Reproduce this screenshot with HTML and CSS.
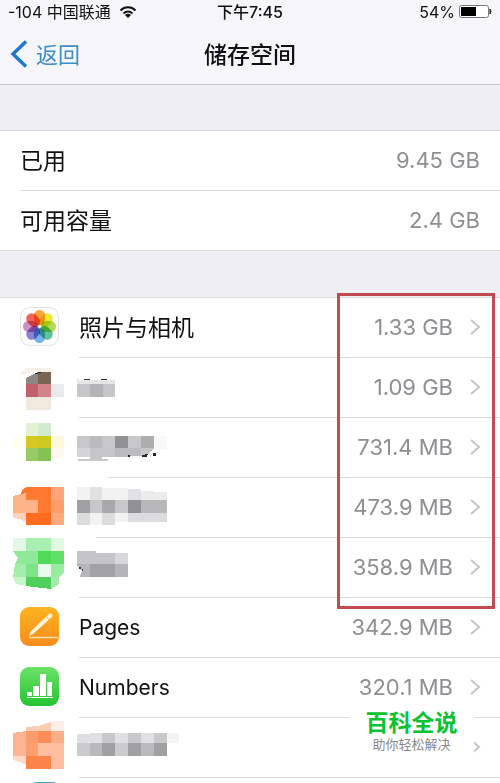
FILE: index.html
```html
<!DOCTYPE html>
<html lang="zh-CN">
<head>
  <meta charset="UTF-8">
  <meta name="viewport" content="width=device-width, initial-scale=1">
  <title>储存空间</title>
  <link rel="stylesheet" href="styles.css">
</head>
<body>

  <svg width="0" height="0" class="defs" aria-hidden="true">
    <symbol id="chevron" viewBox="0 0 12 18">
      <path d="M2 2l8 7-8 7" fill="none" stroke="#c4c4c9" stroke-width="2"/>
    </symbol>
    <linearGradient id="pages-bg" x1="0" y1="0" x2="0" y2="1">
      <stop offset="0" stop-color="#fbb420"/>
      <stop offset="1" stop-color="#f78c1c"/>
    </linearGradient>
    <linearGradient id="numbers-bg" x1="0" y1="0" x2="0" y2="1">
      <stop offset="0" stop-color="#6be268"/>
      <stop offset="1" stop-color="#25c432"/>
    </linearGradient>
  </svg>

  <header class="header">
    <div class="status">
      <div class="carrier">
        <span>-104 中国联通</span>
        <svg width="18" height="14" viewBox="0 0 18 14" aria-hidden="true">
          <path d="M1.5 5.5a10.5 10.5 0 0 1 15 0M4.500 8.500a6.300 6.300 0 0 1 9 0" fill="none" stroke="#111" stroke-width="2"/>
          <path d="M9 13l-3-3a4.200 4.200 0 0 1 6 0z" fill="#111"/>
        </svg>
      </div>
      <span class="time">下午7:45</span>
      <div class="power">
        <span>54%</span>
        <svg width="33" height="14" viewBox="0 0 33 14" aria-hidden="true">
          <rect x="0.500" y="0.500" width="29" height="12" rx="2" fill="#fff" stroke="#777"/>
          <path d="M2 2h15v9H2z" fill="#000"/>
          <path d="M31 4q2 2.500 0 5z" fill="#222" stroke="#222"/>
        </svg>
      </div>
    </div>
    <nav class="navbar">
      <a class="back" href="#">
        <svg width="18" height="28" viewBox="0 0 18 28" aria-hidden="true">
          <path d="M16 1.500L3 14l13 12.500" fill="none" stroke="#1c78d4" stroke-width="3.400"/>
        </svg>
        <span>返回</span>
      </a>
      <h1>储存空间</h1>
    </nav>
  </header>

  <main>
    <dl class="summary">
      <div class="total"><dt>已用</dt><dd>9.45 GB</dd></div>
      <div class="total"><dt>可用容量</dt><dd>2.4 GB</dd></div>
    </dl>

    <div class="apps">
      <ul class="app-list">
        <li><a class="app" href="#">
          <svg class="icon" viewBox="0 0 77 60" aria-hidden="true">
            <rect x="20.500" y="9.500" width="38" height="38" rx="9" fill="#fdfdfd" stroke="#e2e2e6"/>
            <g class="petals">
              <rect x="34" y="12" width="11" height="15" rx="5.500" fill="#fba63c"/>
              <rect x="34" y="12" width="11" height="15" rx="5.500" fill="#eeea32" transform="rotate(45 39.500 28.500)"/>
              <rect x="34" y="12" width="11" height="15" rx="5.500" fill="#b4da55" transform="rotate(90 39.500 28.500)"/>
              <rect x="34" y="12" width="11" height="15" rx="5.500" fill="#62c69a" transform="rotate(135 39.500 28.500)"/>
              <rect x="34" y="12" width="11" height="15" rx="5.500" fill="#76b4ea" transform="rotate(180 39.500 28.500)"/>
              <rect x="34" y="12" width="11" height="15" rx="5.500" fill="#8c82d0" transform="rotate(225 39.500 28.500)"/>
              <rect x="34" y="12" width="11" height="15" rx="5.500" fill="#d092c6" transform="rotate(270 39.500 28.500)"/>
              <rect x="34" y="12" width="11" height="15" rx="5.500" fill="#f5645a" transform="rotate(315 39.500 28.500)"/>
            </g>
          </svg>
          <span class="name">照片与相机</span>
          <span class="size">1.33 GB</span>
          <svg class="arrow"><use href="#chevron"/></svg>
        </a></li>

        <li><a class="app" href="#" aria-label="1.09 GB">
          <svg class="icon mosaic" viewBox="0 0 77 60" aria-hidden="true">
            <path d="M21 14l5-4h25v4H32l-11 3z" fill="#f5f1e9"/>
            <path d="M26 20l12-6v12H26z" fill="#8f8581"/>
            <path d="M38 14h13v12H38z" fill="#786452"/>
            <path d="M35 16l6-2" stroke="#222"/>
            <path d="M26 26h12v13H26z" fill="#c0606c"/>
            <path d="M38 26h13v13H38z" fill="#d08488"/>
            <path d="M51 26h13v13H51z" fill="#e9e9ee"/>
            <path d="M26 39h25v13H26z" fill="#f0e9de"/>
          </svg>
          <svg class="mosaic hidden-name" viewBox="0 0 104 60" aria-hidden="true">
            <path d="M0 19l2 3h36v4H0z" fill="#e6e6e6"/>
            <path d="M0 26h13v13H0zM26 26h12v13H26z" fill="#c6c6c8"/>
            <path d="M13 26h13v13H13z" fill="#b4b4b6"/>
            <path d="M6 22q4-3 8 0zM23 22q4-3 8 0z" fill="#333"/>
          </svg>
          <span class="size">1.09 GB</span>
          <svg class="arrow"><use href="#chevron"/></svg>
        </a></li>

        <li class="inset-far"><a class="app" href="#" aria-label="731.4 MB">
          <svg class="icon mosaic" viewBox="0 0 77 60" aria-hidden="true">
            <path d="M26 5h12v13H26z" fill="#e4f2d4"/>
            <path d="M38 5h13v13H38z" fill="#d2eacd"/>
            <path d="M13 18h13v12H13z" fill="#fffdec"/>
            <path d="M26 18h12v12H26z" fill="#d5c820"/>
            <path d="M38 18h13v12H38z" fill="#cdc91e"/>
            <path d="M51 18h13v12H51z" fill="#fdf7dc"/>
            <path d="M26 30h12v13H26z" fill="#9aca66"/>
            <path d="M38 30h13v13H38z" fill="#85c154"/>
            <path d="M51 30h13v10H51z" fill="#fffaf0"/>
          </svg>
          <svg class="mosaic hidden-name" viewBox="0 0 104 60" aria-hidden="true">
            <path d="M0 18h13v12H0zM25 18h13v12H25zM51 18h13v12H51z" fill="#c8c8ca"/>
            <path d="M13 18h12v12H13z" fill="#bbbbbd"/>
            <path d="M38 18h13v12H38z" fill="#929294"/>
            <path d="M64 18h13v12H64z" fill="#adadaf"/>
            <path d="M77 18h13v14H77z" fill="#f8f8f8"/>
            <path d="M0 30h13v9H0z" fill="#d4d4d6"/>
            <path d="M13 30h12v11H13zM25 30h13v9H25zM64 30h13l-4 5-9 3z" fill="#c6c6c8"/>
            <path d="M38 30h13v9H38zM51 30h13v8H51z" fill="#bcbcbe"/>
            <path d="M1 41h30v2H1z" fill="#c8c8ca"/>
            <path d="M51 37h2v2h-2zM65 37h5v2h-5zM68 36h3v1h-3zM76 35h3v3h-3z" fill="#222"/>
          </svg>
          <span class="size">731.4 MB</span>
          <svg class="arrow"><use href="#chevron"/></svg>
        </a></li>

        <li class="inset-near"><a class="app" href="#" aria-label="473.9 MB">
          <svg class="icon mosaic" viewBox="0 0 77 60" aria-hidden="true">
            <path d="M21 15q2-6 8-6h22v38H26z" fill="#ff7a30"/>
            <path d="M51 9h13v13H51z" fill="#ffa378"/>
            <path d="M13 18l13-3v7h12v13H13z" fill="#ffb388"/>
            <path d="M51 22h13v13H51z" fill="#ff9d68"/>
            <path d="M13 35h13v9l-6-3-7-1z" fill="#ffd2b8"/>
            <path d="M26 35h25v12H26z" fill="#ff6b1f"/>
            <path d="M51 35h13v12H51z" fill="#ffaa7c"/>
          </svg>
          <svg class="mosaic hidden-name" viewBox="0 0 104 60" aria-hidden="true">
            <path d="M0 9h13v13H0zM25 10h26v12H25z" fill="#f2f2f3"/>
            <path d="M13 9h12v13H13zM51 11h13v11H51z" fill="#e1e1e3"/>
            <path d="M64 13h13v9H64zM77 14h13v8H77z" fill="#ebebec"/>
            <path d="M0 22h13v13H0z" fill="#a1a1a3"/>
            <path d="M13 22h12v13H13zM38 22h13v13H38z" fill="#c8c8ca"/>
            <path d="M25 22h13v13H25z" fill="#a8a8aa"/>
            <path d="M51 22h13v13H51z" fill="#909092"/>
            <path d="M64 22h26v13H64z" fill="#b8b8ba"/>
            <path d="M0 35h13v12H0zM25 35h13v12H25zM51 35h39v9H51z" fill="#dcdcde"/>
            <path d="M13 35h12v12H13zM38 35h13v9H38z" fill="#f2f2f3"/>
          </svg>
          <span class="size">473.9 MB</span>
          <svg class="arrow"><use href="#chevron"/></svg>
        </a></li>

        <li><a class="app" href="#" aria-label="358.9 MB">
          <svg class="icon mosaic" viewBox="0 0 77 60" aria-hidden="true">
            <path d="M13 0h51v13H13z" fill="#e2fae5"/>
            <path d="M26 0h25v13H26z" fill="#a9efb1"/>
            <path d="M13 13h25v13H15l3-6z" fill="#90e998"/>
            <path d="M38 13h13v13H38z" fill="#50da57"/>
            <path d="M51 13h13v13H51z" fill="#5fdf68"/>
            <path d="M15 26h11v13H13z" fill="#a2eda9"/>
            <path d="M26 26h12v13H26z" fill="#80e389"/>
            <path d="M38 26h13v13H38z" fill="#e9fbea"/>
            <path d="M51 26h13v8l-5 5h-8z" fill="#98eca0"/>
            <path d="M13 39h13v9l-10-2z" fill="#c9f5cd"/>
            <path d="M26 39h25v12l-25-3z" fill="#50cf5c"/>
            <path d="M51 39h8v7l-8 5z" fill="#a4eaab"/>
          </svg>
          <svg class="mosaic hidden-name" viewBox="0 0 104 60" aria-hidden="true">
            <path d="M0 13h19v2h19v11H0z" fill="#c5c5c7"/>
            <path d="M38 15h13v11H38z" fill="#d8d8da"/>
            <path d="M0 26h13v13H0z" fill="#b6b6b8"/>
            <path d="M13 26h25v13H13z" fill="#a2a2a4"/>
            <path d="M38 26h13v13H38z" fill="#b5b5b7"/>
            <path d="M0 28l5 4-2 7H0z" fill="#fff"/>
            <path d="M2 29h2v2H2zM5 31h1v2H5z" fill="#333"/>
          </svg>
          <span class="size">358.9 MB</span>
          <svg class="arrow"><use href="#chevron"/></svg>
        </a></li>

        <li><a class="app" href="#">
          <svg class="icon" viewBox="0 0 77 60" aria-hidden="true">
            <rect x="20" y="9" width="39" height="39" rx="9" fill="url(#pages-bg)"/>
            <path d="M29 38l2-5 18-17q2-1 3 0t0 3L33 36z" fill="#fff5dc"/>
            <path d="M46 18l3 4" stroke="#f8b85a"/>
            <path d="M29 39.500h29" stroke="#ffe2a8" stroke-width="1.500"/>
          </svg>
          <span class="name latin">Pages</span>
          <span class="size">342.9 MB</span>
          <svg class="arrow"><use href="#chevron"/></svg>
        </a></li>

        <li><a class="app" href="#">
          <svg class="icon" viewBox="0 0 77 60" aria-hidden="true">
            <rect x="20" y="9" width="39" height="39" rx="9" fill="url(#numbers-bg)"/>
            <path d="M27 34h5v4h-5zM33 28h6v10h-6zM40 16h6v22h-6zM47 24h5v14h-5zM27 39h26v1H27z" fill="#fff"/>
          </svg>
          <span class="name latin">Numbers</span>
          <span class="size">320.1 MB</span>
          <svg class="arrow"><use href="#chevron"/></svg>
        </a></li>

        <li><a class="app" href="#" aria-label="App">
          <svg class="icon mosaic" viewBox="0 0 77 60" aria-hidden="true">
            <path d="M26 9l12-1 13-4v9H26z" fill="#fdcbb2"/>
            <path d="M51 3h13v10H51z" fill="#fdeee8"/>
            <path d="M13 15l13-2v25H13z" fill="#fdb490"/>
            <path d="M26 13h12v12H26z" fill="#fc9c6c"/>
            <path d="M38 13h13v12H38z" fill="#fc8d58"/>
            <path d="M51 13h13v12H51z" fill="#fcae88"/>
            <path d="M26 25h12v13H26z" fill="#fc9e70"/>
            <path d="M38 25h26v26H38z" fill="#fdbd9e"/>
            <path d="M13 38h13v9l-6-3-7-2z" fill="#fddac8"/>
            <path d="M26 38h25v13H26z" fill="#fc8448"/>
          </svg>
          <svg class="mosaic hidden-name" viewBox="0 0 104 60" aria-hidden="true">
            <path d="M0 16l25-1v10H0zM38 15h13v10H38zM64 15h13v10H64z" fill="#e0e0e2"/>
            <path d="M25 15h13v10H25zM51 15h13v10H51zM77 15h13v10H77z" fill="#c9c9cb"/>
            <path d="M90 15h12v10H90z" fill="#f5f5f6"/>
            <path d="M0 25h13v13H0zM38 25h13v13H38z" fill="#cbcbcd"/>
            <path d="M13 25h12v13H13zM64 25h13v13H64z" fill="#bababc"/>
            <path d="M25 25h13v13H25zM51 25h13v13H51zM77 25h13v13H77z" fill="#a0a0a2"/>
          </svg>
          <svg class="arrow"><use href="#chevron"/></svg>
        </a></li>

        <li class="peek">
          <svg class="icon" viewBox="0 0 77 5" aria-hidden="true">
            <path d="M33 5q2-1 5-1h14q3 0 4 1z" fill="#2aa9e0"/>
          </svg>
        </li>
      </ul>

      <div class="highlight"></div>
      <div class="watermark">
        <strong>百科全说</strong>
        <span>助你轻松解决</span>
      </div>
    </div>
  </main>

</body>
</html>
```
FILE: styles.css
```css
* {
  box-sizing: border-box;
}

body {
  margin: 0;
  font-family: Inter, "Noto Sans CJK SC", sans-serif;
  font-size: 22px;
  color: #111;
  background: #efeef3;
}

h1, dl, dd, ul {
  margin: 0;
  padding: 0;
}

a {
  color: inherit;
  text-decoration: none;
}

.defs {
  position: absolute;
}

.header {
  background: #f6f5fa;
  border-bottom: 1px solid #c8c7cc;
}

.status,
.navbar {
  display: grid;
  grid-template-columns: 1fr auto 1fr;
  align-items: center;
}

.status {
  height: 24px;
  padding: 0 8px;
  font-size: 16px;
  line-height: 24px;
}

.carrier,
.power {
  display: flex;
  align-items: center;
  gap: 8px;
}

.power {
  justify-content: flex-end;
  gap: 4px;
}

.time {
  font-weight: 500;
}

.navbar {
  height: 60px;
  padding: 0 10px;
}

.back {
  display: flex;
  align-items: center;
  gap: 8px;
  color: #3b8dc4;
}

.back span,
h1 {
  padding-bottom: 2px;
}

h1 {
  font-size: 23px;
  font-weight: 500;
}

.summary {
  margin-top: 45px;
  background: #fff;
  border-top: 1px solid #dad9de;
  border-bottom: 1px solid #dad9de;
}

.total {
  display: flex;
  align-items: center;
  justify-content: space-between;
  height: 59px;
  margin-left: 20px;
  padding: 0 20px 2px 0;
}

.total + .total {
  height: 60px;
  border-top: 1px solid #dad9de;
}

.total dt,
.name {
  padding-bottom: 2px;
  font-size: 23px;
}

.total dd,
.size {
  color: #8e8e93;
}

.apps {
  position: relative;
  margin-top: 46px;
  background: #fff;
  border-top: 1px solid #dad9de;
}

.app-list {
  list-style: none;
}

.app {
  display: flex;
  align-items: center;
  height: 60px;
  padding: 0 19px 2px 0;
}

/* separator starts under the name, not under the icon */
.app-list li {
  background: linear-gradient(#dad9de, #dad9de) 79px 100% / 100% 1px no-repeat;
}

.app-list .inset-near {
  background-position: 96px 100%;
}

.app-list .inset-far {
  background-position: 108px 100%;
}

.app-list .peek {
  height: 5px;
  background: none;
}

.icon {
  display: block;
  flex: none;
  align-self: flex-start;
  width: 77px;
}

.name {
  padding-left: 2px;
}

.latin {
  padding-bottom: 0;
  font-size: 21px;
}

.hidden-name {
  flex: none;
  align-self: flex-start;
  width: 104px;
  height: 60px;
}

.mosaic {
  shape-rendering: crispEdges;
}

.petals rect {
  mix-blend-mode: multiply;
}

.size {
  margin-left: auto;
}

.arrow {
  flex: none;
  width: 12px;
  height: 18px;
  margin-left: 16px;
}

.hidden-name + .arrow {
  margin-left: auto;
}

.highlight {
  position: absolute;
  top: -5px;
  right: 5px;
  width: 158px;
  height: 316px;
  border: 3px solid #c24a50;
}

.watermark {
  position: absolute;
  right: 26px;
  bottom: 18px;
  display: flex;
  flex-direction: column;
  align-items: center;
  width: 125px;
  padding: 6px 0 12px;
  background: #fff;
}

.watermark strong {
  font-size: 23px;
  line-height: 24px;
  color: #0bc331;
}

.watermark span {
  font-size: 13px;
  line-height: 18px;
  color: #888;
}
```
